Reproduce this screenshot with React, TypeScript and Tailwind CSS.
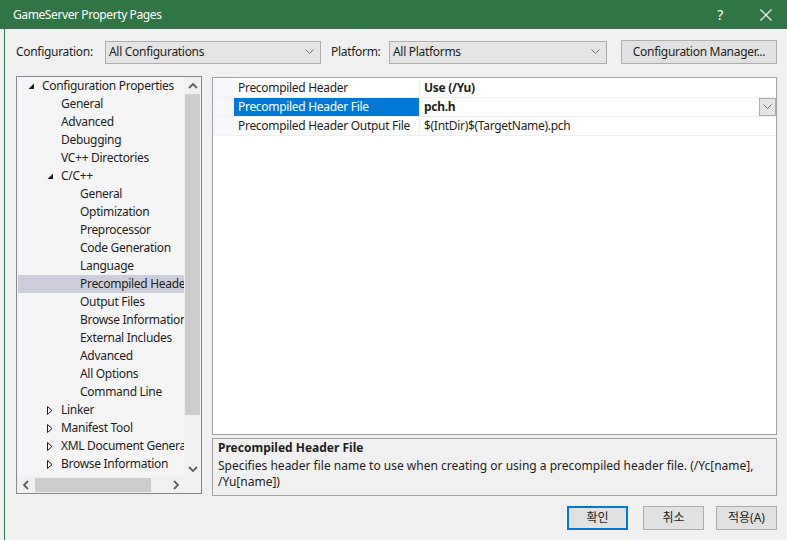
import React from 'react'

type Node = { label: string; level: number; state?: 'open' | 'closed'; selected?: boolean }

const tree: Node[] = [
  { label: 'Configuration Properties', level: 0, state: 'open' },
  { label: 'General', level: 1 },
  { label: 'Advanced', level: 1 },
  { label: 'Debugging', level: 1 },
  { label: 'VC++ Directories', level: 1 },
  { label: 'C/C++', level: 1, state: 'open' },
  { label: 'General', level: 2 },
  { label: 'Optimization', level: 2 },
  { label: 'Preprocessor', level: 2 },
  { label: 'Code Generation', level: 2 },
  { label: 'Language', level: 2 },
  { label: 'Precompiled Headers', level: 2, selected: true },
  { label: 'Output Files', level: 2 },
  { label: 'Browse Information', level: 2 },
  { label: 'External Includes', level: 2 },
  { label: 'Advanced', level: 2 },
  { label: 'All Options', level: 2 },
  { label: 'Command Line', level: 2 },
  { label: 'Linker', level: 1, state: 'closed' },
  { label: 'Manifest Tool', level: 1, state: 'closed' },
  { label: 'XML Document Generator', level: 1, state: 'closed' },
  { label: 'Browse Information', level: 1, state: 'closed' },
]

const props = [
  { name: 'Precompiled Header', value: 'Use (/Yu)', bold: true },
  { name: 'Precompiled Header File', value: 'pch.h', bold: true, selected: true },
  { name: 'Precompiled Header Output File', value: '$(IntDir)$(TargetName).pch' },
]

const indent = ['pl-[11px]', 'pl-[30px]', 'pl-[49px]']

function Chevron({ dir }: { dir: 'up' | 'down' | 'left' | 'right' }) {
  const pts = {
    up: '1,6 5,2 9,6',
    down: '1,2 5,6 9,2',
    left: '6,1 2,5 6,9',
    right: '2,1 6,5 2,9',
  }[dir]
  const size = dir === 'up' || dir === 'down' ? { width: 10, height: 8 } : { width: 8, height: 10 }
  return (
    <svg {...size} viewBox={`0 0 ${size.width} ${size.height}`}>
      <polyline points={pts} fill="none" stroke="#606060" strokeWidth="1.8" />
    </svg>
  )
}

function ComboArrow() {
  return (
    <svg width="9" height="6" viewBox="0 0 9 6">
      <polyline points="0.5,0.5 4.5,4.5 8.5,0.5" fill="none" stroke="#707070" strokeWidth="1" />
    </svg>
  )
}

function Combo({ text, width }: { text: string; width: string }) {
  return (
    <div className={`${width} h-[23px] flex items-center justify-between border border-[#adadad] bg-[#e5e5e5] pl-[3px] pr-[6px]`}>
      <span>{text}</span>
      <ComboArrow />
    </div>
  )
}

function Expander({ state }: { state?: 'open' | 'closed' }) {
  if (state === 'open')
    return (
      <svg width="7" height="7" viewBox="0 0 7 7">
        <polygon points="6,0.5 6,6 0.5,6" fill="#1e1e1e" />
      </svg>
    )
  if (state === 'closed')
    return (
      <svg width="6" height="9" viewBox="0 0 6 9">
        <polygon points="0.5,0.5 5,4.5 0.5,8.5" fill="none" stroke="#1e1e1e" strokeWidth="1" />
      </svg>
    )
  return null
}

function Button({ label, primary }: { label: string; primary?: boolean }) {
  return (
    <div
      className={`w-[61px] h-[24px] flex items-center justify-center bg-[#e1e1e1] ${
        primary ? 'border-2 border-[#0078d7]' : 'border border-[#adadad]'
      }`}
    >
      {label}
    </div>
  )
}

export default function App() {
  return (
    <div className="w-[787px] h-[540px] flex flex-col overflow-hidden bg-[#f0f0f0] text-[12px] text-[#1e1e1e] tracking-[-0.3px] font-['Noto_Sans','Noto_Sans_CJK_KR',sans-serif]">
      {/* title bar */}
      <div className="h-[29px] flex items-center bg-[#317545] text-white pl-[13px] tracking-[-0.4px]">
        <span className="flex-1">GameServer Property Pages</span>
        <span className="text-[14px] mr-[37px]">?</span>
        <svg width="12" height="12" viewBox="0 0 12 12" className="mr-[15px]">
          <path d="M0.5 0.5 L11.5 11.5 M11.5 0.5 L0.5 11.5" stroke="white" strokeWidth="1.2" />
        </svg>
      </div>

      <div className="flex-1 flex">
        <div className="w-[4px]" />
        <div className="w-px bg-[#317545]" />
        <div className="flex-1 flex flex-col pl-[11px] pr-[10px] pt-[11px]">
          {/* configuration row */}
          <div className="h-[24px] flex items-center">
            <span className="w-[89px]">Configuration:</span>
            <Combo text="All Configurations" width="w-[216px]" />
            <span className="w-[58px] ml-[10px]">Platform:</span>
            <Combo text="All Platforms" width="w-[218px]" />
            <div className="ml-[14px] flex-1 h-[24px] flex items-center justify-center border border-[#adadad] bg-[#e1e1e1]">
              Configuration Manager...
            </div>
          </div>

          <div className="mt-[12px] flex gap-[10px]">
            {/* tree */}
            <div className="w-[186px] h-[418px] flex flex-col border border-[#828790] bg-[#f0f0f0]">
              <div className="flex-1 flex min-h-0">
                <div className="flex-1 bg-[#f5f5f5] overflow-hidden">
                  {tree.map((n, i) => (
                    <div
                      key={i}
                      className={`h-[18px] flex items-center whitespace-nowrap ${indent[n.level]} ${
                        n.selected ? 'bg-[#cccedb] ml-px' : ''
                      }`}
                    >
                      <div className={`${n.selected ? 'w-[13px]' : 'w-[14px]'} shrink-0 flex items-center`}>
                        <Expander state={n.state} />
                      </div>
                      <span className="shrink-0">{n.label}</span>
                    </div>
                  ))}
                </div>
                <div className="w-[17px] flex flex-col">
                  <div className="h-[17px] flex items-center justify-center">
                    <Chevron dir="up" />
                  </div>
                  <div className="h-[321px] mx-px bg-[#cdcdcd]" />
                  <div className="flex-1" />
                  <div className="h-[17px] flex items-center justify-center">
                    <Chevron dir="down" />
                  </div>
                </div>
              </div>
              <div className="h-[16px] flex">
                <div className="w-[18px] flex items-center justify-center">
                  <Chevron dir="left" />
                </div>
                <div className="w-[116px] my-px bg-[#cdcdcd]" />
                <div className="flex-1" />
                <div className="w-[17px] flex items-center justify-center">
                  <Chevron dir="right" />
                </div>
                <div className="w-[17px]" />
              </div>
            </div>

            {/* right column */}
            <div className="flex-1 flex flex-col mt-px">
              <div className="h-[358px] border border-[#a0a0a0] bg-white pt-px">
                {props.map((p, i) => (
                  <div key={i} className="h-[19px] flex border-b border-[#f0f0f0]">
                    <div className="w-[21px] bg-[#f5f7fa]" />
                    <div
                      className={`w-[186px] pl-[4px] flex items-center border-r border-[#f0f0f0] whitespace-nowrap ${
                        p.selected ? 'bg-[#0078d7] text-white' : ''
                      }`}
                    >
                      {p.name}
                    </div>
                    <div className={`flex-1 flex items-center pl-[4px] ${p.bold ? 'font-bold' : ''}`}>
                      <span className="flex-1">{p.value}</span>
                      {p.selected && (
                        <div className="w-[17px] h-[18px] flex items-center justify-center border border-[#adadad] bg-[#e5e5e5]">
                          <ComboArrow />
                        </div>
                      )}
                    </div>
                  </div>
                ))}
              </div>
              <div className="mt-[3px] h-[58px] border border-[#a0a0a0] bg-[#f0f0f0] px-[5px] tracking-normal">
                <div className="font-bold leading-[18px]">Precompiled Header File</div>
                <div className="mt-px leading-[16px]">
                  Specifies header file name to use when creating or using a precompiled header file. (/Yc[name],
                  <br />
                  /Yu[name])
                </div>
              </div>
            </div>
          </div>

          {/* buttons */}
          <div className="mt-[10px] flex justify-end tracking-normal">
            <Button label="확인" primary />
            <div className="w-[15px]" />
            <Button label="취소" />
            <div className="w-[12px]" />
            <Button label="적용(A)" />
          </div>
        </div>
      </div>
    </div>
  )
}
